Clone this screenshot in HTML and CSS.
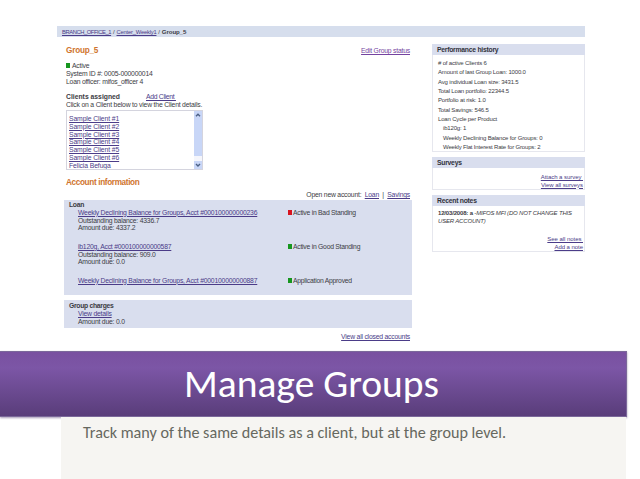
FILE: index.html
```html
<!DOCTYPE html>
<html lang="en">
<head>
<meta charset="utf-8">
<title>Manage Groups</title>
<link rel="stylesheet" href="styles.css">
</head>
<body>
<main class="app">
  <nav class="crumbs"><a>BRANCH_OFFICE_1</a> / <a>Center_Weekly1</a> / <b>Group_5</b></nav>
  <div class="columns">
    <section class="main">
      <div class="row top"><h2>Group_5</h2><a class="edit">Edit Group status</a></div>
      <div class="facts">
        <p><i class="dot"></i>Active</p>
        <p class="sysid">System ID #: 0005-000000014</p>
        <p>Loan officer: mifos_officer 4</p>
      </div>
      <div class="assigned"><b>Clients assigned</b><a>Add Client&nbsp;</a></div>
      <p class="hint">Click on a Client below to view the Client details.</p>
      <div class="clients">
        <ul>
          <li><a>Sample Client #1</a></li>
          <li><a>Sample Client #2</a></li>
          <li><a>Sample Client #3</a></li>
          <li><a>Sample Client #4</a></li>
          <li><a>Sample Client #5</a></li>
          <li><a>Sample Client #6</a></li>
          <li><a>Felicia Befuga</a></li>
        </ul>
        <div class="scroll">
          <svg viewBox="0 0 8 8"><path d="M2 5.2 4 3.2 6 5.2"/></svg>
          <span class="gap"></span>
          <svg viewBox="0 0 8 8"><path d="M2 3 4 5 6 3"/></svg>
        </div>
      </div>
      <h2 class="account">Account information</h2>
      <p class="open">Open new account: &nbsp;<a>Loan</a> &nbsp;| &nbsp;<a>Savings</a></p>
      <div class="panel loans">
        <b>Loan</b>
        <div class="loan">
          <div><a class="acct">Weekly Declining Balance for Groups, Acct #000100000000236</a><p>Outstanding balance: 4336.7</p><p>Amount due: 4337.2</p></div>
          <p><i class="dot red"></i>Active in Bad Standing</p>
        </div>
        <div class="loan">
          <div><a class="acct">ib120g, Acct #000100000000587</a><p>Outstanding balance: 909.0</p><p>Amount due: 0.0</p></div>
          <p><i class="dot"></i>Active in Good Standing</p>
        </div>
        <div class="loan">
          <div><a class="acct">Weekly Declining Balance for Groups, Acct #000100000000887</a></div>
          <p><i class="dot"></i>Application Approved</p>
        </div>
      </div>
      <div class="panel charges">
        <b>Group charges</b>
        <div class="indent"><a>View details</a><p>Amount due: 0.0</p></div>
      </div>
      <p class="closed"><a>View all closed accounts</a></p>
    </section>
    <aside class="side">
      <section class="card perf">
        <h3>Performance history</h3>
        <ul>
          <li># of active Clients 6</li>
          <li>Amount of last Group Loan: 1000.0</li>
          <li>Avg individual Loan size: 3431.5</li>
          <li>Total Loan portfolio: 22344.5</li>
          <li>Portfolio at risk: 1.0</li>
          <li>Total Savings: 546.5</li>
          <li>Loan Cycle per Product</li>
          <li class="sub">ib120g: 1</li>
          <li class="sub">Weekly Declining Balance for Groups: 0</li>
          <li class="sub">Weekly Flat Interest Rate for Groups: 2</li>
        </ul>
      </section>
      <section class="card surveys">
        <h3>Surveys</h3>
        <div class="links"><a>Attach a survey&nbsp;</a><a>View all surveys</a></div>
      </section>
      <section class="card notes">
        <h3>Recent notes</h3>
        <p class="note"><b>12/03/2008: a</b> <em>-MIFOS MFI (DO NOT CHANGE THIS<br>USER ACCOUNT)</em></p>
        <div class="links"><a>See all notes&nbsp;</a><a>Add a note</a></div>
      </section>
    </aside>
  </div>
</main>
<header class="band"><h1>Manage Groups</h1></header>
<div class="caption"><p>Track many of the same details as a client, but at the group level.</p></div>
</body>
</html>
```
FILE: styles.css
```css
* { box-sizing: border-box; margin: 0; padding: 0; }
body {
  width: 640px; height: 479px; overflow: hidden; background: #fff; color: #3c3c44;
  display: flex; flex-direction: column;
  font: 6.8px/7.8px "Liberation Sans", Arial, sans-serif;
  letter-spacing: -0.21px;
}
ul { list-style: none; }
a { color: #4b3c88; text-decoration: underline; text-decoration-thickness: 1px; text-underline-offset: 1px; }
p, a, b, li { white-space: nowrap; }
.app { height: 351px; flex: none; padding: 26px 55px 0 57px; }
.crumbs { height: 11px; line-height: 11px; padding-left: 5px; background: #d6deed; font-size: 6.1px; letter-spacing: 0.1px; }
.crumbs a { letter-spacing: -0.42px; font-size: 5.8px; }
.crumbs a + a { letter-spacing: -0.2px; }
.crumbs b { letter-spacing: -0.1px; }
.columns { display: flex; justify-content: space-between; padding-left: 7px; }
.main { width: 348px; }
h2 { color: #cf742d; font-size: 8.2px; line-height: 10px; }
.row { display: flex; justify-content: space-between; }
.top { padding: 9px 2px 0; }
.edit { line-height: 10px; color: #7443a0; }
.facts { padding: 6px 2px 0; }
.dot { display: inline-block; width: 4px; height: 5px; margin-right: 2px; background: #16961f; }
.dot.red { background: #d8131f; }
.assigned { display: flex; padding: 8px 2px 0; }
.assigned b { width: 80px; letter-spacing: 0; }
.assigned a { letter-spacing: -0.3px; }
.hint { padding-left: 2px; letter-spacing: -0.19px; }
.clients { display: flex; justify-content: space-between; width: 137px; height: 60px; margin: 1px 0 0 2px; border: 1px solid #d4d4de; padding-left: 2px; overflow: hidden; }
.clients ul { padding-top: 4px; letter-spacing: -0.1px; }
.scroll { width: 8px; background: #c8d6f7; display: flex; flex-direction: column; justify-content: space-between; }
.scroll svg { display: block; width: 8px; height: 8px; fill: none; stroke: #4d6185; stroke-width: 1.4; }
.gap { height: 5px; margin-top: auto; background: #f5f6fc; }
.account { margin: 8px 0 0 2px; letter-spacing: -0.35px; }
.open { text-align: right; padding-right: 2px; margin-top: 3px; height: 9px; }
.panel { background: #d9deee; padding-left: 5px; }
.panel > b { display: block; letter-spacing: -0.3px; }
.loans { height: 95px; padding-top: 1px; }
.loan { display: flex; height: 34px; padding-left: 9px; }
.loan > div { width: 210px; }
.loan > p { letter-spacing: -0.25px; }
.loan .dot { margin-right: 1px; }
.acct { display: block; }
.charges { height: 28px; margin-top: 5px; padding-top: 2px; }
.indent { padding-left: 9px; }
.closed { text-align: right; padding-right: 2px; margin-top: 5px; }
.side { width: 153px; padding-top: 7px; font-size: 6px; letter-spacing: -0.17px; }
.card { border: 1px solid #e6e7ee; border-top: 0; margin-bottom: 5px; }
.card h3 { height: 11px; line-height: 11px; font-size: 6.8px; letter-spacing: -0.25px; padding-left: 5px; margin: 0 -1px; background: #d9deee; color: #32323c; }
.perf { height: 108px; }
.perf ul { padding: 4px 0 0 5px; line-height: 9.35px; }
.perf .sub { padding-left: 5px; }
.surveys { height: 33px; }
.links { display: flex; flex-direction: column; align-items: flex-end; padding-right: 1px; line-height: 7.5px; letter-spacing: -0.05px; }
.surveys .links { padding-top: 6px; }
.notes { height: 57px; }
.note { padding: 4px 0 0 5px; line-height: 7.6px; }
.notes .links { padding-top: 11px; }
.band { width: 627px; height: 66px; flex: none; border: 1px solid #7b689a; border-left: 0; background: linear-gradient(#7950a0, #7c56a6 25%, #593d7a); box-shadow: 0 1px 2px #a79bb7; }
h1 { font: 400 39.5px/64px Carlito, Lato, sans-serif; letter-spacing: 0; color: #fff; padding-left: 184px; white-space: nowrap; }
.caption { width: 565px; flex: 1; margin-left: 61px; padding: 6px 0 0 22px; background: #f6f5f2; position: relative; }
.caption p { font: 16.15px/20px Carlito, Lato, sans-serif; letter-spacing: 0; color: #66685f; }
```
